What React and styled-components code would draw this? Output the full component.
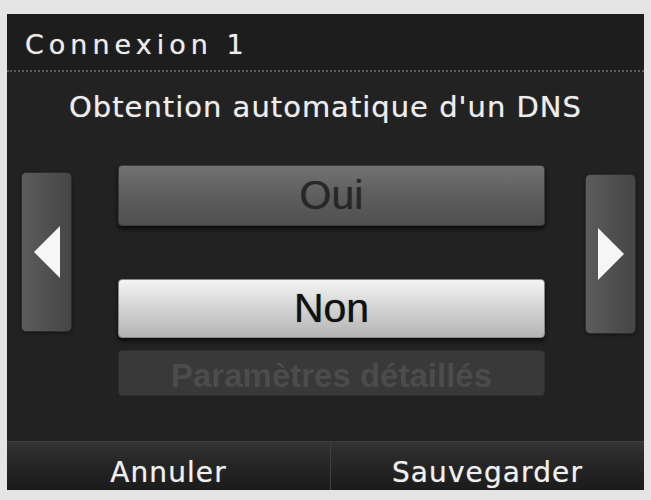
import React from 'react'
import styled, { createGlobalStyle } from 'styled-components'

const GlobalStyle = createGlobalStyle`
    html, body {
        margin:0;
        padding:0;
        background-color:#e4e4e4;
    }
    body {
        font-family:"DejaVu Sans", "Open Sans", sans-serif;
    }
`

const Arrow = ({ dir }) => (
    <svg width="30" height="54" viewBox="0 0 30 54">
        {dir === 'left'
            ? <polygon points="28,1 28,53 2,27" fill="#f6f6f6" />
            : <polygon points="2,1 2,53 28,27" fill="#f6f6f6" />}
    </svg>
)

const App = () => {
    return (
        <>
            <GlobalStyle />
            <Page>
                <Screen>
                    <Header>
                        <Title>Connexion 1</Title>
                    </Header>
                    <Question>Obtention automatique d'un DNS</Question>
                    <Body>
                        <ArrowButton $top={42}>
                            <Arrow dir="left" />
                        </ArrowButton>
                        <Options>
                            <Choice $variant="off">Oui</Choice>
                            <Choice $variant="on">Non</Choice>
                            <Details>Paramètres détaillés</Details>
                        </Options>
                        <ArrowButton $top={44} $gap={40}>
                            <Arrow dir="right" />
                        </ArrowButton>
                    </Body>
                    <Footer>
                        <FooterButton>Annuler</FooterButton>
                        <FooterButton>Sauvegarder</FooterButton>
                    </Footer>
                </Screen>
            </Page>
        </>
    )
}

export default App

const Page = styled.div`
    padding:14px 7px 10px 7px;
`
const Screen = styled.div`
    width:637px;
    height:476px;
    background-color:#222222;
    display:flex;
    flex-direction:column;
    overflow:hidden;
`
const Header = styled.div`
    height:56px;
    background-color:#1d1d1d;
    border-bottom:2px dotted #5a5a5a;
    display:flex;
    align-items:center;
    padding-left:18px;
`
const Title = styled.h1`
    margin:4px 0 0 0;
    color:#ececec;
    font-size:27px;
    font-weight:normal;
    letter-spacing:5px;
    text-shadow:0 0 1px #999;
`
const Question = styled.div`
    height:58px;
    box-sizing:border-box;
    padding-top:12px;
    display:flex;
    align-items:center;
    justify-content:center;
    color:#ededed;
    font-size:29px;
    letter-spacing:1px;
    text-shadow:0 0 1px #999;
`
const Body = styled.div`
    flex:1;
    display:flex;
    align-items:flex-start;
    padding-left:14px;
`
const ArrowButton = styled.div`
    margin-top:${p => p.$top}px;
    margin-left:${p => p.$gap || 0}px;
    width:51px;
    height:160px;
    box-sizing:border-box;
    border:1px solid #2c2c2c;
    border-radius:5px;
    background:linear-gradient(90deg, #5c5c5c, #4e4e4e 60%, #464646);
    box-shadow:0 1px 3px #111;
    display:flex;
    align-items:center;
    justify-content:center;
`
const Options = styled.div`
    margin-left:46px;
    width:427px;
    display:flex;
    flex-direction:column;
    padding-top:35px;
`
const Choice = styled.div`
    height:${p => p.$variant === 'on' ? 59 : 61}px;
    margin-bottom:${p => p.$variant === 'on' ? 12 : 53}px;
    box-sizing:border-box;
    border-radius:4px;
    display:flex;
    align-items:center;
    justify-content:center;
    font-size:41px;
    font-family:"Liberation Sans", Arial, sans-serif;
    color:${p => p.$variant === 'on' ? '#111111' : '#272727'};
    text-shadow:0 0 1px ${p => p.$variant === 'on' ? '#444' : '#333'};
    background:${p => p.$variant === 'on'
        ? 'linear-gradient(180deg, #f4f4f4, #d6d6d6 45%, #b4b4b4)'
        : 'linear-gradient(180deg, #727272, #5e5e5e 50%, #4f4f4f)'};
    border:1px solid ${p => p.$variant === 'on' ? '#888' : '#3c3c3c'};
    box-shadow:0 3px 4px #0c0c0c;
`
const Details = styled.div`
    height:46px;
    box-sizing:border-box;
    border-radius:4px;
    background-color:#393939;
    border:1px solid #2e2e2e;
    overflow:hidden;
    display:flex;
    justify-content:center;
    padding-top:8px;
    font-family:"Liberation Sans", Arial, sans-serif;
    font-size:33px;
    font-weight:bold;
    line-height:33px;
    color:#4c4c4c;
    filter:blur(0.7px);
`
const Footer = styled.div`
    height:48px;
    display:grid;
    grid-template-columns:323px 1fr;
    background:linear-gradient(180deg, #343434, #272727 40%, #1b1b1b);
    border-top:1px solid #3e3e3e;
`
const FooterButton = styled.div`
    display:flex;
    align-items:center;
    justify-content:center;
    box-sizing:border-box;
    padding-top:12px;
    color:#efefef;
    font-size:28px;
    letter-spacing:1.1px;
    text-shadow:0 0 1px #999;
    & + & {
        border-left:1px solid #3f3f3f;
    }
`
